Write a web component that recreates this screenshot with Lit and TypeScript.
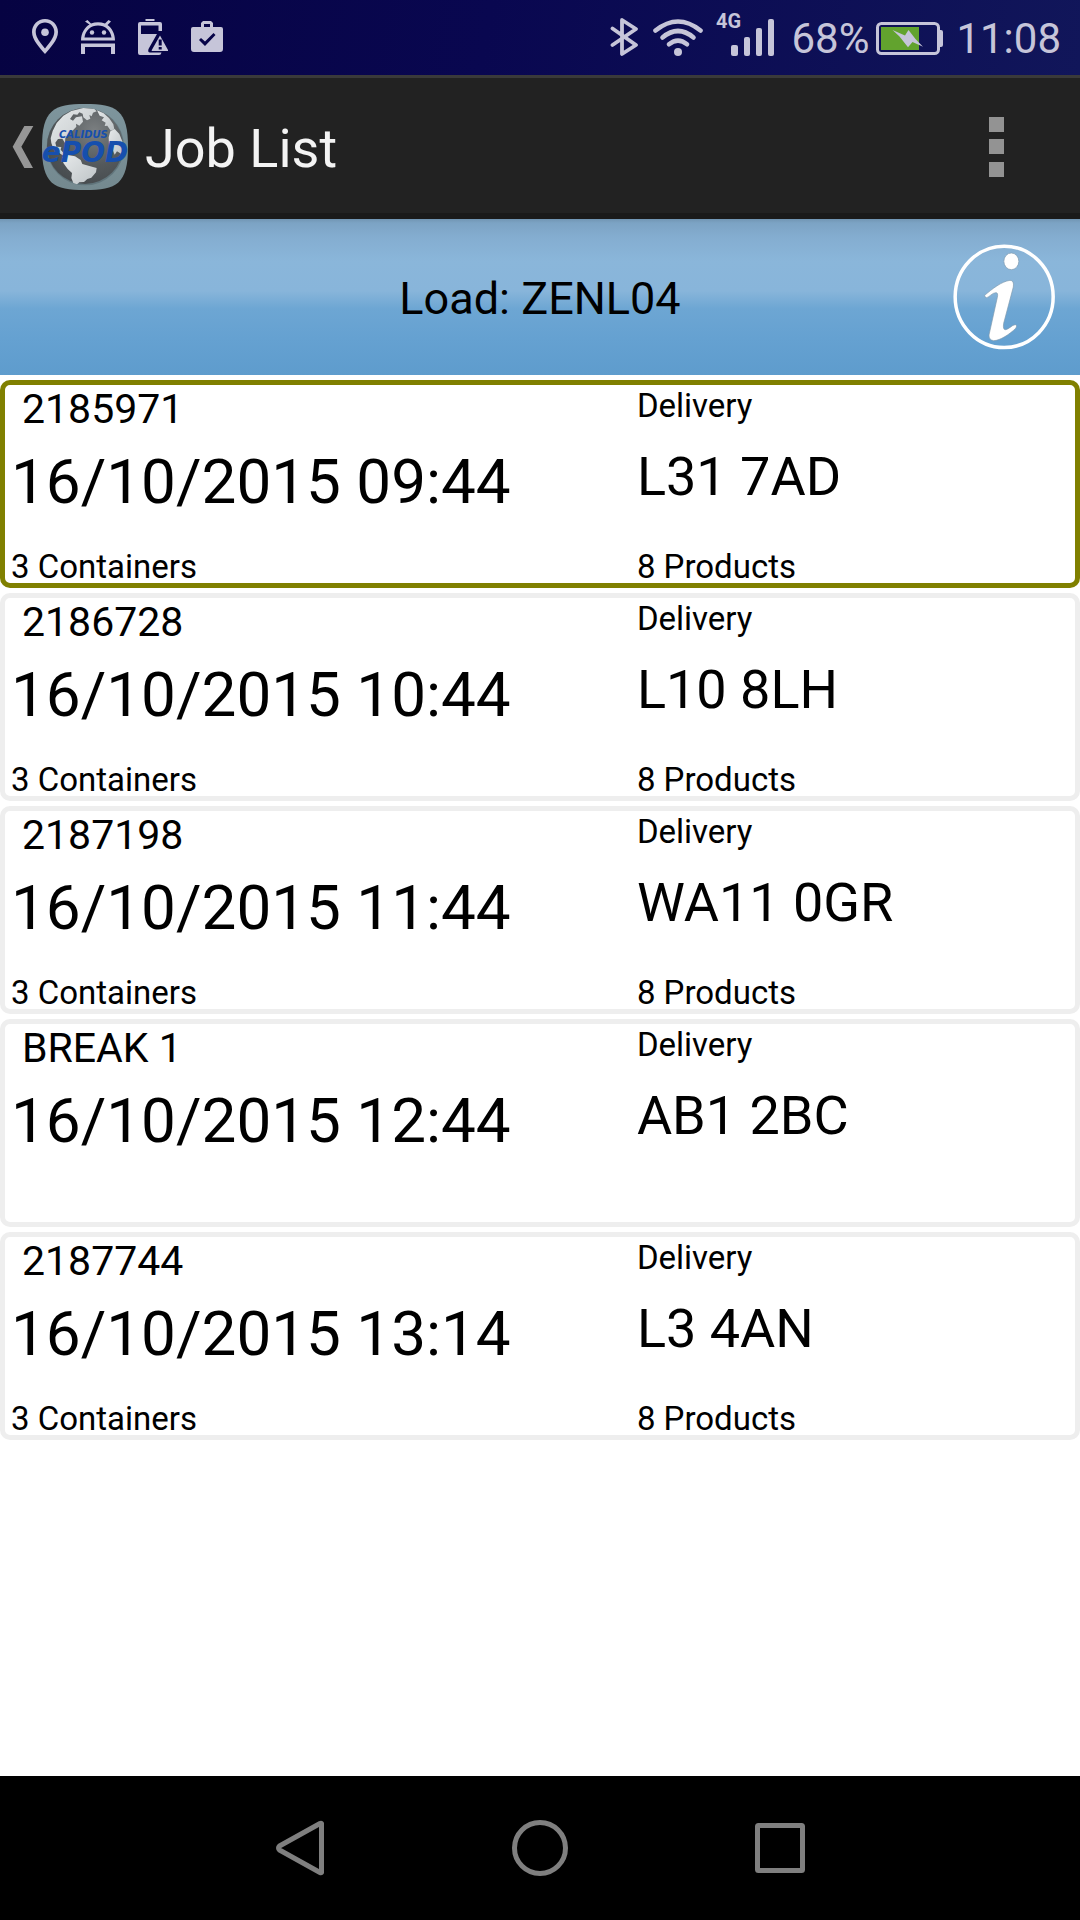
import { LitElement, html, css, svg } from "lit";
import { customElement, property } from "lit/decorators.js";
import { classMap } from "lit/directives/class-map.js";

interface Job {
  id: string;
  when: string;
  type: string;
  postcode: string;
  containers: string;
  products: string;
}

const JOBS: Job[] = [
  { id: "2185971", when: "16/10/2015 09:44", type: "Delivery", postcode: "L31 7AD", containers: "3 Containers", products: "8 Products" },
  { id: "2186728", when: "16/10/2015 10:44", type: "Delivery", postcode: "L10 8LH", containers: "3 Containers", products: "8 Products" },
  { id: "2187198", when: "16/10/2015 11:44", type: "Delivery", postcode: "WA11 0GR", containers: "3 Containers", products: "8 Products" },
  { id: "BREAK 1", when: "16/10/2015 12:44", type: "Delivery", postcode: "AB1 2BC", containers: "", products: "" },
  { id: "2187744", when: "16/10/2015 13:14", type: "Delivery", postcode: "L3 4AN", containers: "3 Containers", products: "8 Products" },
];

@customElement("status-bar")
class StatusBar extends LitElement {
  static styles = css`
    :host {
      display: flex;
      justify-content: space-between;
      align-items: center;
      height: 75px;
      padding: 0 19px 0 32px;
      background: linear-gradient(100deg, #060342 0%, #090750 45%, #11165a 100%);
      color: #c6c5d9;
      font-size: 42px;
      line-height: 48px;
    }
    .group { display: flex; align-items: center; }
    .notices { gap: 23px; }
    .system { gap: 7px; }
    .radios { display: flex; gap: 13px; margin-right: 8px; }
    .battery { margin-right: 6px; }
    .reading { padding-top: 2px; }
    .net { font: bold 20px Roboto, sans-serif; }
    svg { display: block; fill: currentColor; }
  `;

  render() {
    return html`
      <div class="group notices">
        <svg width="26" height="75" viewBox="32 0 26 75" role="img" aria-label="Location">
          <path fill-rule="evenodd" d="M45 19c-7.300 0-13 5.700-13 13c0 8 8 16 13 22c5-6 13-14 13-22c0-7.300-5.700-13-13-13zM45 22.500c5.300 0 9.300 4.200 9.300 9.500c0 5.500-5.300 11.500-9.300 16.500c-4-5-9.300-11-9.300-16.500c0-5.300 4-9.500 9.300-9.500z"/>
          <circle cx="45" cy="32.300" r="3.800"/>
        </svg>
        <svg width="34" height="75" viewBox="82 0 34 75" role="img" aria-label="Debugging">
          <path fill-rule="evenodd" d="M82 40.500C82 33 86 27 90.500 24.500L86 21.500L88.500 20L92 23.500Q99 20.800 106 23.500L109.500 20L112 21.500L108.500 25C113 28 116 34 116 40.500zM85.500 37.500H112.500C111.500 30 106 25.500 99 25.500S86.500 30 85.500 37.500z"/>
          <circle cx="93" cy="32.500" r="2.200"/><circle cx="105" cy="32.500" r="2.200"/>
          <path d="M82 43.500H116V54H112V47H86V54H82z"/>
        </svg>
        <svg width="30" height="75" viewBox="137 0 30 75" role="img" aria-label="Battery warning">
          <path fill-rule="evenodd" d="M144.500 19h9v2h-9zM139 22h20q2 0 2 2v7h-3.500V25.500H140V34H156L147.500 49Q146.500 52.500 149 52.500H160.500Q160 55 158 55H139q-2 0-2-2V24q0-2 2-2z"/>
          <path fill-rule="evenodd" d="M159 35.500L167 50q.500 1-.500 1H151.500q-1.200 0-.700-1zM157.700 39.500v6h3v-6zM157.700 47v2.500h3V47z"/>
        </svg>
        <svg width="32" height="75" viewBox="191 0 32 75" role="img" aria-label="Work profile">
          <path fill-rule="evenodd" d="M201 27v-4l2-2h8l2 2v4h8q2 0 2 2v20q0 3-3 3H194q-3 0-3-3V29q0-2 2-2zM204 27h6v-3h-6zM199 40l2-2l4 3.500l8.500-8.500l2 2L205 46z"/>
        </svg>
      </div>
      <div class="group system">
        <div class="radios">
          <svg width="30" height="75" viewBox="610 0 30 75" role="img" aria-label="Bluetooth">
            <path d="M612.500 28.500L636 45L622 54V20L636 29L612.500 45" fill="none" stroke="currentColor" stroke-width="3.800" stroke-linejoin="round" stroke-linecap="round"/>
          </svg>
          <svg width="50" height="75" viewBox="654 0 50 75" role="img" aria-label="Wi-Fi">
            <g fill="none" stroke="currentColor" stroke-width="4.600" stroke-linecap="round">
              <path d="M656.500 30.500Q679 12.500 701.500 30.500"/>
              <path d="M663.500 37.500Q679 24.500 694.500 37.500"/>
              <path d="M670 44.300Q679 37 688 44.300"/>
            </g>
            <circle cx="679" cy="52" r="4"/>
          </svg>
          <svg width="60" height="75" viewBox="714 0 60 75" role="img" aria-label="4G signal">
            <text class="net" x="714" y="28">4G</text>
            <rect x="729" y="45" width="7" height="11" rx="2"/>
            <rect x="742" y="37" width="6" height="19" rx="2"/>
            <rect x="754" y="28" width="6" height="28" rx="2"/>
            <rect x="766" y="19" width="6" height="37" rx="2"/>
          </svg>
        </div>
        <span class="reading">68%</span>
        <svg class="battery" width="67" height="75" viewBox="875 0 67 75" role="img" aria-label="Charging">
          <rect x="880" y="27" width="38" height="23" fill="#62a32e"/>
          <rect x="876.500" y="23.500" width="61" height="30" rx="4" fill="none" stroke="currentColor" stroke-width="3"/>
          <path d="M938 30h2q2 0 2 2v13q0 2-2 2h-2z"/>
          <path d="M891.500 30L904 35.500L907.500 30L914.500 39L922 46.700L911.500 42L907 47.300L898.500 36.500z"/>
        </svg>
        <time class="reading">11:08</time>
      </div>
    `;
  }
}

@customElement("action-bar")
class ActionBar extends LitElement {
  @property() heading = "";

  static styles = css`
    :host {
      display: flex;
      align-items: center;
      justify-content: space-between;
      box-sizing: border-box;
      height: 144px;
      padding: 3px 60px 0 12px;
      border-top: 3px solid #3a3a3a;
      border-bottom: 6px solid #1a1a1a;
      background: #222;
      color: #f3f3f3;
    }
    button { display: flex; align-items: center; padding: 0; border: 0; background: none; cursor: pointer; }
    .title { display: flex; align-items: center; gap: 17px; }
    .up { gap: 8px; }
    .menu { width: 48px; height: 96px; justify-content: center; }
    h1 { margin: 0; padding-top: 4px; font-size: 54px; line-height: 64px; font-weight: 400; }
    svg { display: block; }
    .brand { font-family: "DejaVu Sans", sans-serif; font-weight: 700; font-style: italic; fill: #164fae; }
    .small { font-size: 30px; }
    .large { font-size: 84px; }
  `;

  render() {
    return html`
      <div class="title">
        <button class="up" aria-label="Back">
          <svg width="22" height="42" viewBox="37 153 66 126"><path fill="#969696" d="M74 153H101L65 215L100 279H74L39 215z"/></svg>
          <svg width="86" height="86" viewBox="126 87 258 258">
            <defs>
              <radialGradient id="sea" cx=".62" cy=".3" r=".75">
                <stop offset="0" stop-color="#7b7f81"/><stop offset=".6" stop-color="#54595c"/><stop offset="1" stop-color="#464b4e"/>
              </radialGradient>
              <linearGradient id="land" x1="0" y1="0" x2="1" y2="1">
                <stop offset="0" stop-color="#e6e9ea"/><stop offset="1" stop-color="#bdc3c6"/>
              </linearGradient>
              <linearGradient id="tile" x1="0" y1="0" x2="0" y2="1">
                <stop offset="0" stop-color="#7e959d"/><stop offset="1" stop-color="#74898f"/>
              </linearGradient>
            </defs>
            <path fill="url(#tile)" d="M255 87C350 87 384 105 384 216S350 345 255 345S126 327 126 216S160 87 255 87z"/>
            <circle cx="256" cy="215" r="116" fill="#61757c"/>
            <circle cx="255" cy="213" r="114" fill="url(#sea)"/>
            <g fill="url(#land)">
              <path d="M152 190L158 168L170 144L190 122L214 108L250 99L283 102L290 109L279 113L275 124L268 120L271 131L261 136L250 127L248 116L238 112L232 119L220 118L210 132L219 137L228 127L246 124L249 140L238 152L228 146L229 155L219 166L207 174L196 190L195 204L187 191L174 192L166 203L169 215L184 216L182 224L194 238L188 241L172 230L159 218L154 204z"/>
              <path d="M188 246L203 240L225 244L242 255L247 267L268 273L290 279L288 292L274 308L262 312L252 321L238 322L231 328L220 324L214 309L216 294L203 282L190 264z"/>
              <path d="M291 106L311 115L327 129L340 148L343 163L332 167L322 152L314 153L317 143L305 136L312 127L299 122z"/>
              <path d="M331 169L344 162L358 177L367 199L370 222L363 236L351 229L344 239L337 222L327 209L326 187z"/>
            </g>
            <text class="brand small" x="177" y="188">CALIDUS</text>
            <text class="brand large" x="125" y="261">ePOD</text>
          </svg>
        </button>
        <h1>${this.heading}</h1>
      </div>
      <button class="menu" aria-label="More options">
        <svg width="15" height="60" viewBox="0 0 15 60" fill="#939393">${[0, 22, 45].map((y) => svg`<rect y=${y} width="15" height="15"/>`)}</svg>
      </button>
    `;
  }
}

@customElement("load-header")
class LoadHeader extends LitElement {
  @property() load = "";

  static styles = css`
    :host {
      display: grid;
      grid-template-columns: 1fr auto 1fr;
      align-items: center;
      height: 156px;
      padding: 0 24px;
      background: linear-gradient(#7195b3 0, #7ca3c4 4px, #84add0 18px, #8ab6da 42px, #88b5da 72px, #6da6d3 90px, #65a1d1 120px, #5e9ccd 100%);
      color: #000;
    }
    h2 { grid-column: 2; margin: 0; padding-top: 4px; font-size: 45px; line-height: 54px; font-weight: 400; }
    button { justify-self: end; padding: 0; border: 0; background: none; cursor: pointer; }
    svg { display: block; }
  `;

  render() {
    return html`
      <h2>Load: ${this.load}</h2>
      <button aria-label="Load information">
        <svg width="104" height="106" viewBox="96 506 312 318">
          <ellipse cx="252.500" cy="664.500" rx="147" ry="152" fill="none" stroke="#fff" stroke-width="10.500"/>
          <g fill="#fff" stroke="#7d98ad" stroke-width="2">
            <ellipse cx="274" cy="558" rx="22.500" ry="25"/>
            <path d="M194 660C215 642 245 618 270 615Q283 615 280 635L251 744Q248 763 256 763C268 762 276 748 286 748Q293 750 287 759C270 776 240 796 221 796Q206 794 207 779L232 666Q235 652 228 652C217 652 207 666 200 667Q193 666 194 660z"/>
          </g>
        </svg>
      </button>
    `;
  }
}

@customElement("job-list")
class JobList extends LitElement {
  @property({ attribute: false }) jobs: Job[] = [];
  @property() selected = "";

  static styles = css`
    :host { display: block; flex: 1; padding-top: 5px; background: #fff; }
    ul { display: flex; flex-direction: column; gap: 5px; margin: 0; padding: 0; list-style: none; }
    .card {
      display: grid;
      grid-template-columns: 10fr 7fr;
      grid-template-rows: 60px auto 1fr;
      box-sizing: border-box;
      width: 100%;
      min-height: 208px;
      padding: 0 0 0 6px;
      border: 5px solid #eee;
      border-radius: 10px;
      background: #fff;
      color: #000;
      font-family: inherit;
      text-align: left;
      cursor: pointer;
    }
    .selected { border-color: #808000; }
    .id { padding-left: 11px; font-size: 41px; line-height: 49px; }
    .when { font-size: 62px; line-height: 74px; }
    .postcode { font-size: 54px; line-height: 63px; }
    .note { font-size: 33px; line-height: 42px; }
    .count { align-self: end; font-size: 33px; line-height: 33px; }
  `;

  render() {
    return html`<ul>
      ${this.jobs.map(
        (job) => html`<li>
          <button class=${classMap({ card: true, selected: job.id === this.selected })}>
            <span class="id">${job.id}</span>
            <span class="note">${job.type}</span>
            <span class="when">${job.when}</span>
            <span class="postcode">${job.postcode}</span>
            <span class="count">${job.containers}</span>
            <span class="count">${job.products}</span>
          </button>
        </li>`
      )}
    </ul>`;
  }
}

@customElement("nav-bar")
class NavBar extends LitElement {
  static styles = css`
    :host { display: grid; grid-template-columns: repeat(3, minmax(0, 240px)); justify-content: center; height: 144px; background: #000; }
    button { display: flex; align-items: center; justify-content: center; padding: 0; border: 0; background: none; cursor: pointer; }
    svg { display: block; fill: none; stroke: #7f7f7f; stroke-width: 5; stroke-linejoin: round; }
  `;

  render() {
    return html`
      <button aria-label="Back"><svg width="60" height="60" viewBox="0 0 60 60"><path d="M51.500 5.500V54.500Q51 55 50 54.500L9.500 32Q7.500 30 9.500 28L50 5.500Q51 5 51.500 5.500z"/></svg></button>
      <button aria-label="Home"><svg width="60" height="60" viewBox="0 0 60 60"><circle cx="30" cy="30" r="25.500"/></svg></button>
      <button aria-label="Recent apps"><svg width="60" height="60" viewBox="0 0 60 60"><rect x="7.500" y="7.500" width="45" height="45" rx="1"/></svg></button>
    `;
  }
}

@customElement("app-root")
class AppRoot extends LitElement {
  static styles = css`
    :host {
      display: flex;
      flex-direction: column;
      min-height: 100vh;
      background: #fff;
      font-family: Roboto, sans-serif;
    }
  `;

  render() {
    return html`
      <status-bar></status-bar>
      <action-bar heading="Job List"></action-bar>
      <load-header load="ZENL04"></load-header>
      <job-list .jobs=${JOBS} selected="2185971"></job-list>
      <nav-bar></nav-bar>
    `;
  }
}
